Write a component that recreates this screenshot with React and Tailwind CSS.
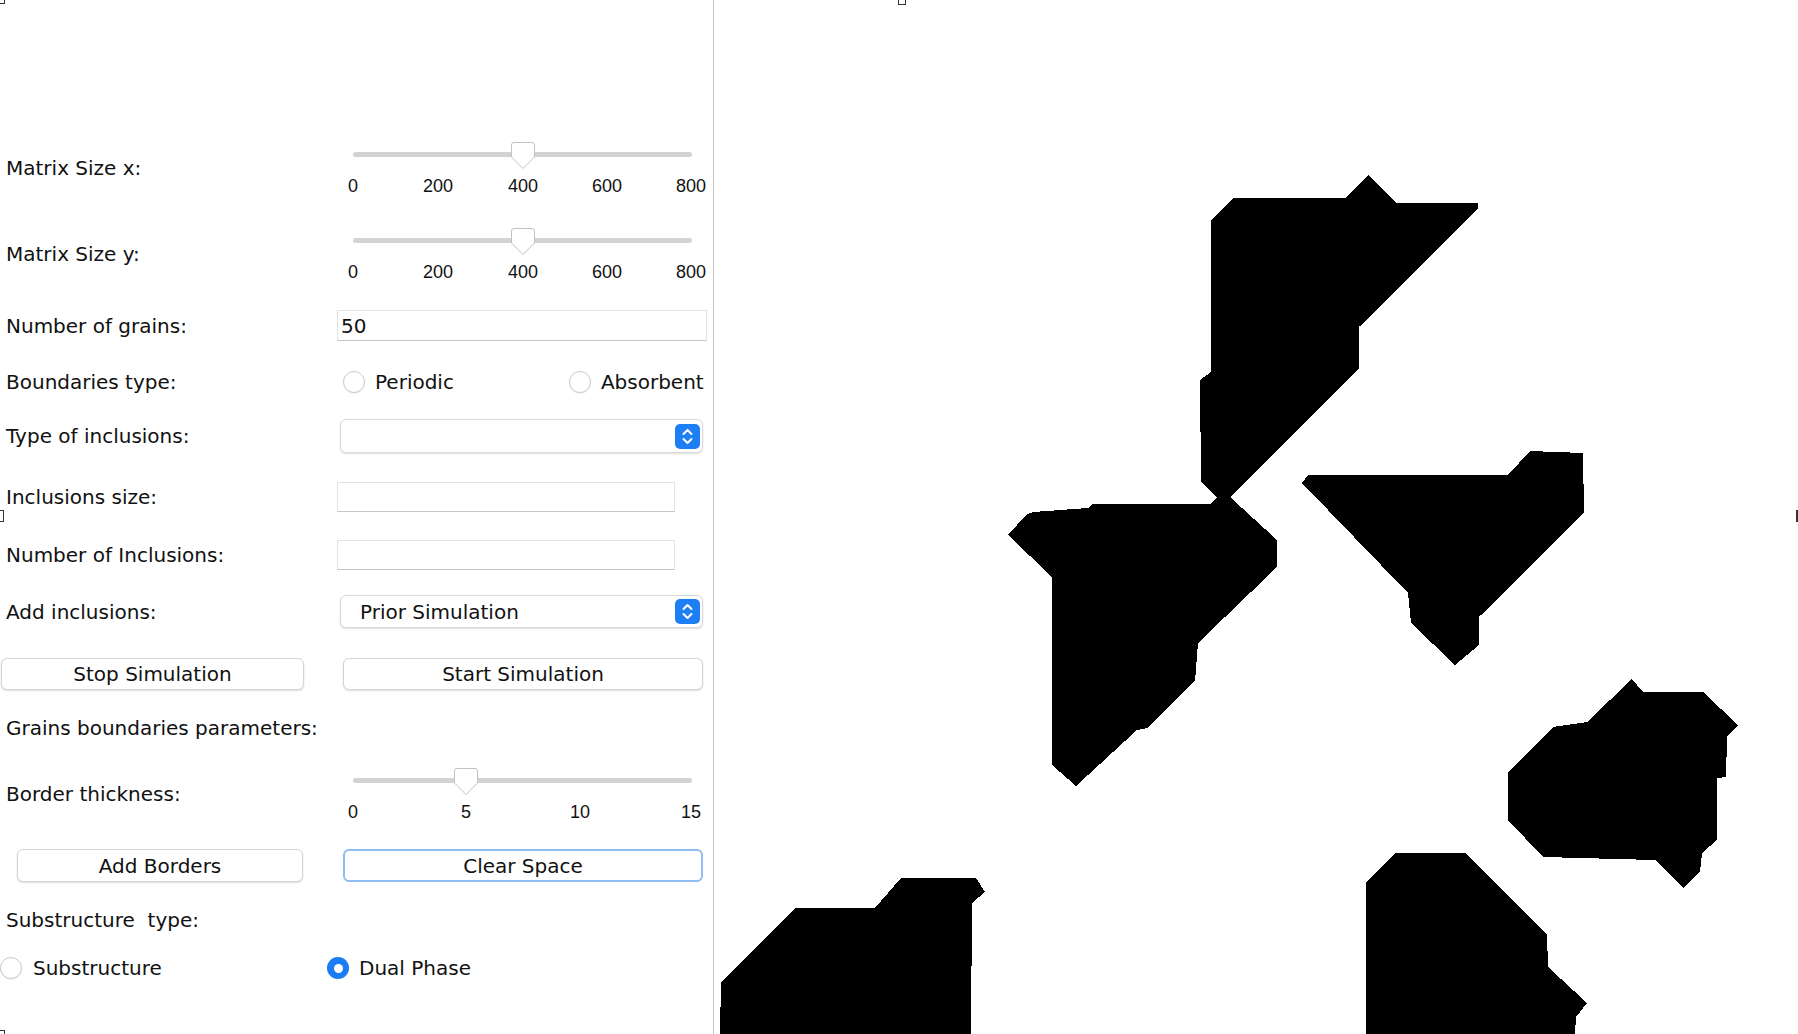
import React from "react";

const LABEL = "font-['DejaVu_Sans',sans-serif] text-[20px] text-[#111]";

function Thumb({ className }) {
  return (
    <svg className={className} width="26" height="29" viewBox="0 0 26 29">
      <path
        d="M4 1.5 H22 A2.5 2.5 0 0 1 24.5 4 V16 L13 27.5 L1.5 16 V4 A2.5 2.5 0 0 1 4 1.5 Z"
        fill="#ffffff"
        stroke="#c2c2c2"
        strokeWidth="1"
      />
    </svg>
  );
}

function SizeSlider() {
  return (
    <div className="relative h-full w-[370px] font-['Liberation_Sans',Arial,sans-serif] text-[18px] text-[#111]">
      <div className="absolute left-[16px] top-[13px] h-[5px] w-[339px] rounded-full bg-[#d3d3d3]" />
      <Thumb className="absolute left-[173px] top-[2px]" />
      <span className="absolute left-[16px] top-[37px] -translate-x-1/2 leading-[20px]">0</span>
      <span className="absolute left-[101px] top-[37px] -translate-x-1/2 leading-[20px]">200</span>
      <span className="absolute left-[186px] top-[37px] -translate-x-1/2 leading-[20px]">400</span>
      <span className="absolute left-[270px] top-[37px] -translate-x-1/2 leading-[20px]">600</span>
      <span className="absolute left-[354px] top-[37px] -translate-x-1/2 leading-[20px]">800</span>
    </div>
  );
}

function BorderSlider() {
  return (
    <div className="relative h-full w-[370px] font-['Liberation_Sans',Arial,sans-serif] text-[18px] text-[#111]">
      <div className="absolute left-[16px] top-[13px] h-[5px] w-[339px] rounded-full bg-[#d3d3d3]" />
      <Thumb className="absolute left-[116px] top-[2px]" />
      <span className="absolute left-[16px] top-[37px] -translate-x-1/2 leading-[20px]">0</span>
      <span className="absolute left-[129px] top-[37px] -translate-x-1/2 leading-[20px]">5</span>
      <span className="absolute left-[243px] top-[37px] -translate-x-1/2 leading-[20px]">10</span>
      <span className="absolute left-[354px] top-[37px] -translate-x-1/2 leading-[20px]">15</span>
    </div>
  );
}

function ComboArrow() {
  return (
    <svg width="25" height="25" viewBox="0 0 25 25">
      <rect x="0" y="0" width="25" height="25" rx="5" fill="#1e7ef4" />
      <path d="M8.5 10 L12.5 6 L16.5 10" fill="none" stroke="#fff" strokeWidth="2" strokeLinecap="round" strokeLinejoin="round" />
      <path d="M8.5 15 L12.5 19 L16.5 15" fill="none" stroke="#fff" strokeWidth="2" strokeLinecap="round" strokeLinejoin="round" />
    </svg>
  );
}

function Combo({ text }) {
  return (
    <div className="ml-[3px] flex h-full w-[363px] items-center justify-between rounded-[6px] border border-[#dadada] bg-white pl-[19px] pr-[2px] shadow-[0_1px_2px_rgba(0,0,0,0.14)]">
      <span className={LABEL}>{text}</span>
      <ComboArrow />
    </div>
  );
}

function Radio({ checked }) {
  if (checked) {
    return (
      <span className="flex h-[22px] w-[22px] shrink-0 items-center justify-center rounded-full bg-[#1c7cf3]">
        <span className="h-[9px] w-[9px] rounded-full bg-white" />
      </span>
    );
  }
  return <span className="h-[22px] w-[22px] shrink-0 rounded-full border border-[#cacaca] bg-white shadow-[0_1px_1px_rgba(0,0,0,0.06)]" />;
}

function Label({ children }) {
  return <div className={`w-[337px] shrink-0 pl-[6px] ${LABEL}`}>{children}</div>;
}

function Button({ children, className }) {
  return (
    <div className={`flex h-full items-center justify-center rounded-[6px] bg-white ${LABEL} ${className}`}>
      {children}
    </div>
  );
}

function Canvas() {
  return (
    <svg className="h-full w-full" viewBox="714 0 1084 1034" preserveAspectRatio="none" shapeRendering="crispEdges">
      <polygon
        fill="#000"
        points="1211,220 1233,198 1346,198 1368,175 1397,203 1478,203 1478,209 1359,327 1359,368 1230,497 1217,497 1201,482 1200,380 1211,372"
      />
      <polygon
        fill="#000"
        points="1217,497 1230,497 1277,540 1277,567 1198,643 1195,681 1147,728 1137,730 1076,786 1052,765 1052,577 1008,535 1027,514 1033,512 1088,508 1092,504 1211,504"
      />
      <polygon
        fill="#000"
        points="1302,483 1308,475 1508,475 1530,451 1583,453 1584,513 1479,617 1479,645 1455,665 1411,623 1408,593"
      />
      <polygon
        fill="#000"
        points="1632,679 1643,692 1703,692 1738,725 1727,737 1726,777 1717,778 1717,840 1702,853 1700,872 1683,888 1655,860 1543,857 1508,820 1508,773 1553,727 1587,722"
      />
      <polygon
        fill="#000"
        points="720,1034 721,982 795,908 875,908 901,878 976,878 985,892 972,903 971,1034"
      />
      <polygon
        fill="#000"
        points="1366,1034 1366,882 1395,853 1466,853 1547,935 1548,967 1587,1003 1576,1017 1575,1034"
      />
    </svg>
  );
}

export default function App() {
  return (
    <div className="relative flex h-[1034px] w-[1798px] overflow-hidden bg-white">
      <div className="flex h-full w-[714px] shrink-0 flex-col border-r border-[#c4c4c4] bg-white">
        <div className="mt-[139px] flex h-[58px] items-center">
          <Label>Matrix Size x:</Label>
          <SizeSlider />
        </div>
        <div className="mt-[28px] flex h-[58px] items-center">
          <Label>Matrix Size y:</Label>
          <SizeSlider />
        </div>
        <div className="mt-[27px] flex h-[31px] items-center">
          <Label>Number of grains:</Label>
          <div className="flex h-full w-[370px] items-center border border-[#e3e3e3] border-b-[#c6c6c6] bg-white pl-[3px]">
            <span className={LABEL}>50</span>
          </div>
        </div>
        <div className="mt-[26px] flex h-[30px] items-center">
          <Label>Boundaries type:</Label>
          <div className="ml-[6px] flex items-center gap-[10px]">
            <Radio />
            <span className={LABEL}>Periodic</span>
          </div>
          <div className="ml-[115px] flex items-center gap-[10px]">
            <Radio />
            <span className={LABEL}>Absorbent</span>
          </div>
        </div>
        <div className="mt-[22px] flex h-[34px] items-center">
          <Label>Type of inclusions:</Label>
          <Combo text="" />
        </div>
        <div className="mt-[29px] flex h-[30px] items-center">
          <Label>Inclusions size:</Label>
          <div className="h-full w-[338px] border border-[#e3e3e3] border-b-[#c6c6c6] bg-white" />
        </div>
        <div className="mt-[28px] flex h-[30px] items-center">
          <Label>Number of Inclusions:</Label>
          <div className="h-full w-[338px] border border-[#e3e3e3] border-b-[#c6c6c6] bg-white" />
        </div>
        <div className="mt-[25px] flex h-[33px] items-center">
          <Label>Add inclusions:</Label>
          <Combo text="Prior Simulation" />
        </div>
        <div className="mt-[30px] flex h-[32px] items-center">
          <Button className="ml-[1px] w-[303px] border border-[#d4d4d4] shadow-[0_1px_2px_rgba(0,0,0,0.14)]">Stop Simulation</Button>
          <Button className="ml-[39px] w-[360px] border border-[#d4d4d4] shadow-[0_1px_2px_rgba(0,0,0,0.14)]">Start Simulation</Button>
        </div>
        <div className="mt-[23px] flex h-[30px] items-center">
          <div className={`pl-[6px] ${LABEL}`}>Grains boundaries parameters:</div>
        </div>
        <div className="mt-[22px] flex h-[58px] items-center">
          <Label>Border thickness:</Label>
          <BorderSlider />
        </div>
        <div className="mt-[26px] flex h-[33px] items-center">
          <Button className="ml-[17px] w-[286px] border border-[#d4d4d4] shadow-[0_1px_2px_rgba(0,0,0,0.14)]">Add Borders</Button>
          <Button className="ml-[40px] w-[360px] border-2 border-[#8ebcf3]">Clear Space</Button>
        </div>
        <div className="mt-[23px] flex h-[30px] items-center">
          <div className={`whitespace-pre pl-[6px] ${LABEL}`}>Substructure  type:</div>
        </div>
        <div className="mt-[18px] flex h-[30px] items-center">
          <div className="flex w-[327px] items-center gap-[11px]">
            <Radio />
            <span className={LABEL}>Substructure</span>
          </div>
          <div className="flex items-center gap-[10px]">
            <Radio checked />
            <span className={LABEL}>Dual Phase</span>
          </div>
        </div>
      </div>
      <div className="h-full flex-1">
        <Canvas />
      </div>

      <div className="absolute left-0 top-0 h-[4px] w-[5px] border-b border-r border-[#333]" />
      <div className="absolute left-[898px] top-0 h-[5px] w-[8px] border border-t-0 border-[#333] bg-white" />
      <div className="absolute left-0 top-[510px] h-[12px] w-[4px] border border-l-0 border-[#333] bg-white" />
      <div className="absolute right-0 top-[510px] h-[12px] w-[2px] bg-[#333]" />
      <div className="absolute bottom-0 left-0 h-[4px] w-[5px] border-r border-t border-[#333]" />
    </div>
  );
}
